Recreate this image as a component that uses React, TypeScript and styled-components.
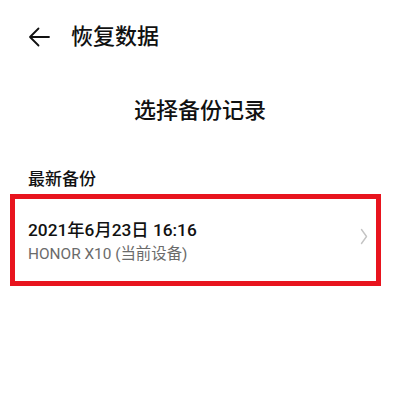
import React from "react";
import styled, { createGlobalStyle } from "styled-components";

const Global = createGlobalStyle`
  html, body { margin: 0; padding: 0; background: #ffffff; }
  body { font-family: Roboto, "Noto Sans CJK SC", "Noto Sans", sans-serif; color: #111; }
`;

const Page = styled.div`
  width: 400px;
  height: 408px;
  background: #fff;
  display: flex;
  flex-direction: column;
`;

const Header = styled.header`
  height: 74px;
  display: flex;
  align-items: center;
  padding-left: 28px;
  gap: 21px;
`;

const BackButton = styled.button`
  border: none;
  background: none;
  padding: 0;
  width: 22px;
  height: 22px;
  display: flex;
  align-items: center;
  justify-content: center;
  color: #111;
`;

const Title = styled.h1`
  margin: 0;
  font-size: 22px;
  font-weight: 500;
  line-height: 30px;
  color: #111;
`;

const Heading = styled.h2`
  margin: 22px 0 0;
  text-align: center;
  font-size: 22px;
  font-weight: 500;
  line-height: 30px;
  color: #111;
`;

const SectionLabel = styled.div`
  margin: 41px 0 0 28px;
  font-size: 17px;
  font-weight: 500;
  line-height: 24px;
  color: #111;
`;

const RecordCard = styled.div`
  margin: 3px 19px 0 10px;
  height: 92px;
  box-sizing: border-box;
  border: 5px solid #e8141e;
  display: flex;
  align-items: center;
  padding: 2px 8px 0 13px;
`;

const RecordText = styled.div`
  flex: 1;
  display: flex;
  flex-direction: column;
  gap: 1px;
`;

const RecordDate = styled.div`
  font-size: 17.3px;
  font-weight: 500;
  line-height: 24px;
  color: #111;
`;

const RecordDevice = styled.div`
  font-size: 15.4px;
  font-weight: 400;
  line-height: 22px;
  color: #6b6b6b;
`;

const Chevron = styled.span`
  display: flex;
  margin-bottom: 10px;
`;

export default function App() {
  return (
    <>
      <Global />
      <Page>
        <Header>
          <BackButton aria-label="返回">
            <svg width="22" height="20" viewBox="0 0 22 20" fill="none">
              <path d="M21 10H2M10.5 1.5L2 10l8.5 8.5" stroke="#111" strokeWidth="1.8" strokeLinecap="round" strokeLinejoin="round" />
            </svg>
          </BackButton>
          <Title>恢复数据</Title>
        </Header>
        <Heading>选择备份记录</Heading>
        <SectionLabel>最新备份</SectionLabel>
        <RecordCard>
          <RecordText>
            <RecordDate>2021年6月23日 16:16</RecordDate>
            <RecordDevice>HONOR X10 (当前设备)</RecordDevice>
          </RecordText>
          <Chevron>
            <svg width="8" height="17" viewBox="0 0 8 17" fill="none">
              <path d="M1.5 1.5L6.5 8.5l-5 7" stroke="#c4c4c4" strokeWidth="1.4" strokeLinecap="round" strokeLinejoin="round" />
            </svg>
          </Chevron>
        </RecordCard>
      </Page>
    </>
  );
}
